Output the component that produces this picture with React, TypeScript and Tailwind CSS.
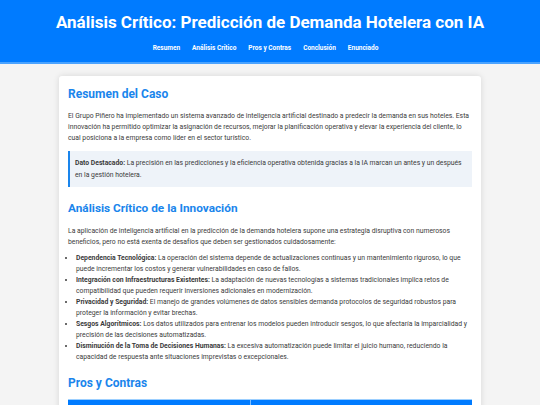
export default function App() {
  const items = [
    ["Dependencia Tecnológica:", " La operación del sistema depende de actualizaciones continuas y un mantenimiento riguroso, lo que puede incrementar los costos y generar vulnerabilidades en caso de fallos."],
    ["Integración con Infraestructuras Existentes:", " La adaptación de nuevas tecnologías a sistemas tradicionales implica retos de compatibilidad que pueden requerir inversiones adicionales en modernización."],
    ["Privacidad y Seguridad:", " El manejo de grandes volúmenes de datos sensibles demanda protocolos de seguridad robustos para proteger la información y evitar brechas."],
    ["Sesgos Algorítmicos:", " Los datos utilizados para entrenar los modelos pueden introducir sesgos, lo que afectaría la imparcialidad y precisión de las decisiones automatizadas."],
    ["Disminución de la Toma de Decisiones Humanas:", " La excesiva automatización puede limitar el juicio humano, reduciendo la capacidad de respuesta ante situaciones imprevistas o excepcionales."],
  ];
  return (
    <div className="min-h-[405px] bg-[#f4f4f4] font-['Roboto',sans-serif] text-[#3a3a3a]">
      <header className="bg-[#007bff] border-b-2 border-b-[#4aa3ff] h-[64px] flex flex-col items-center">
        <h1 className="text-white font-bold text-[17px] leading-[22px] mt-[11px]">
          Análisis Crítico: Predicción de Demanda Hotelera con IA
        </h1>
        <nav className="flex gap-[12px] mt-[10px] pr-[9px] text-[6.5px] font-bold text-white leading-[10px]">
          <span>Resumen</span>
          <span>Análisis Crítico</span>
          <span>Pros y Contras</span>
          <span>Conclusión</span>
          <span>Enunciado</span>
        </nav>
      </header>
      <main className="w-[422px] mx-auto mt-[12px] bg-white rounded-[3px] shadow-[0_0_6px_rgba(0,0,0,0.12)] px-[9px] pt-[9px] pb-[20px]">
        <h2 className="text-[#1a85ec] font-bold text-[12px] leading-[18px]">Resumen del Caso</h2>
        <p className="text-[6.8px] leading-[11px] mt-[8px]">
          El Grupo Piñero ha implementado un sistema avanzado de inteligencia artificial destinado a predecir la demanda en sus hoteles. Esta innovación ha permitido optimizar la asignación de recursos, mejorar la planificación operativa y elevar la experiencia del cliente, lo cual posiciona a la empresa como líder en el sector turístico.
        </p>
        <div className="mt-[7px] bg-[#eef3f9] border-l-2 border-l-[#1a85ec] px-[5px] pt-[7px] pb-[6px] text-[6.8px] leading-[11.5px]">
          <b>Dato Destacado:</b> La precisión en las predicciones y la eficiencia operativa obtenida gracias a la IA marcan un antes y un después en la gestión hotelera.
        </div>
        <h2 className="text-[#1a85ec] font-bold text-[11.8px] leading-[18px] mt-[12px]">Análisis Crítico de la Innovación</h2>
        <p className="text-[6.8px] leading-[11px] mt-[9px]">
          La aplicación de inteligencia artificial en la predicción de la demanda hotelera supone una estrategia disruptiva con numerosos beneficios, pero no está exenta de desafíos que deben ser gestionados cuidadosamente:
        </p>
        <ul className="mt-[5px] text-[6.8px] leading-[11px] list-disc pl-[8px]">
          {items.map(([b, t]) => (
            <li key={b}><b>{b}</b>{t}</li>
          ))}
        </ul>
        <h2 className="text-[#1a85ec] font-bold text-[12px] leading-[18px] mt-[11px]">Pros y Contras</h2>
        <div className="mt-[7px] grid grid-cols-[183px_1fr] border-t border-t-[#9ccfff]">
          <div className="bg-[#007bff] h-[20px] border-r border-r-[#7fbfff]" />
          <div className="bg-[#007bff] h-[20px]" />
        </div>
      </main>
    </div>
  );
}
